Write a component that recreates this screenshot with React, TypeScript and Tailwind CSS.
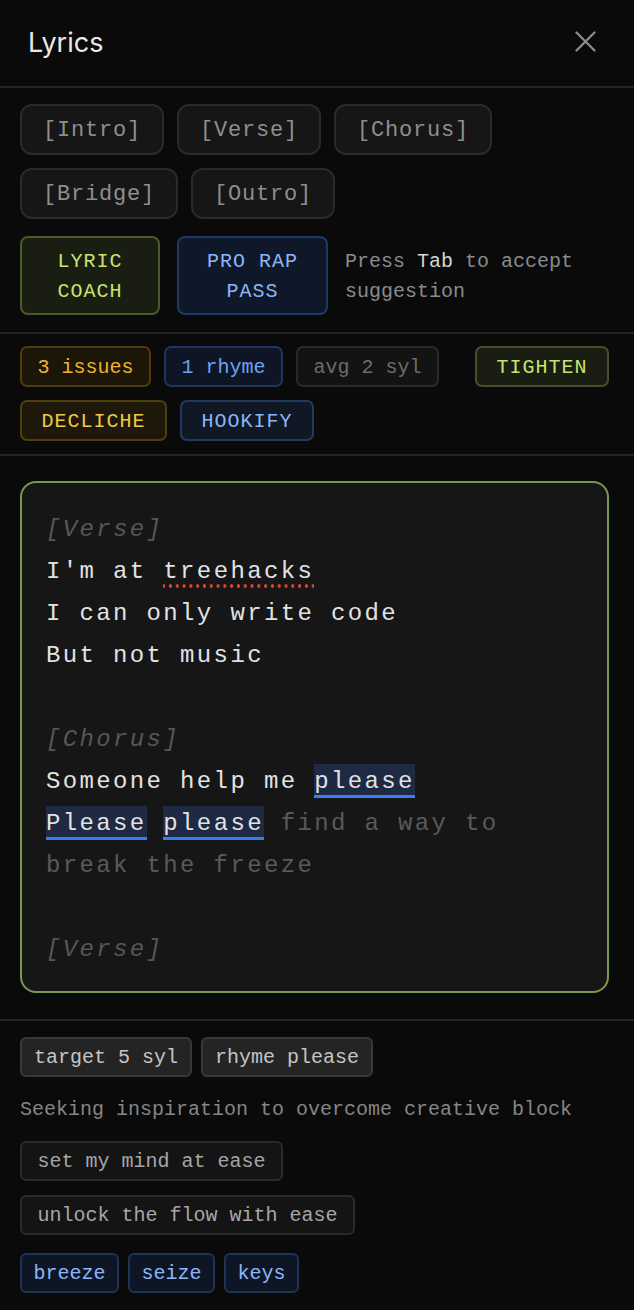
import React from "react";

const mono = "font-['Liberation_Mono','DejaVu_Sans_Mono',monospace]";

function SectionChip({ label }: { label: string }) {
  return (
    <div className="h-[51px] flex items-center px-[21px] pt-[2px] rounded-[12px] border-2 border-[#2a2a2a] bg-[#161616] text-[22px] tracking-[0.8px] text-[#8e8e8e]">
      {label}
    </div>
  );
}

export default function App() {
  return (
    <div className={`w-[634px] h-[1310px] bg-[#0a0a0a] overflow-hidden ${mono}`}>
      {/* Header */}
      <div className="h-[88px] flex items-center justify-between pl-[28px] pr-[38px] border-b-2 border-[#242424]">
        <div className="font-['Inter','Roboto',sans-serif] text-[27px] text-[#e8e8e8] leading-none mt-[-2px]">Lyrics</div>
        <svg width="21" height="21" viewBox="0 0 21 21" className="mt-[-4px]">
          <path d="M1.5 1.5 L19.5 19.5 M19.5 1.5 L1.5 19.5" stroke="#8f8f8f" strokeWidth="2.2" strokeLinecap="round" />
        </svg>
      </div>

      {/* Section chips + modes */}
      <div className="pl-5 pr-[25px] pt-[16px] pb-[17px] border-b-2 border-[#242424]">
        <div className="flex flex-wrap gap-x-[13px] gap-y-[13px]">
          <SectionChip label="[Intro]" />
          <SectionChip label="[Verse]" />
          <SectionChip label="[Chorus]" />
          <SectionChip label="[Bridge]" />
          <SectionChip label="[Outro]" />
        </div>
        <div className="flex items-center gap-[17px] mt-[17px]">
          <div className="w-[140px] h-[79px] shrink-0 flex items-center justify-center text-center rounded-[8px] border-2 border-[#4a5a2c] bg-[#1a1e12] text-[#c9e46c] text-[20px] tracking-[1px] leading-[30px] px-[4px] pt-[2px]">
            LYRIC COACH
          </div>
          <div className="w-[151px] h-[79px] shrink-0 flex items-center justify-center text-center rounded-[8px] border-2 border-[#1f3a66] bg-[#0f1828] text-[#8cb6f8] text-[20px] tracking-[1px] leading-[30px] px-[4px] pt-[2px]">
            PRO RAP PASS
          </div>
          <div className="text-[20px] leading-[30px] text-[#8a8a8a] pt-[2px]">
            Press <span className="text-[#d6d6d6]">Tab</span> to accept suggestion
          </div>
        </div>
      </div>

      {/* Stats + actions */}
      <div className="pl-5 pr-[25px] pt-[12px] pb-[13px] border-b-2 border-[#242424]">
        <div className="flex flex-wrap gap-[13px] text-[20px]">
          <div className="h-[41px] flex items-center pt-[2px] px-[15.5px] rounded-[7px] border-2 border-[#4e3a0e] bg-[#1c1608] text-[#f0b232]">3 issues</div>
          <div className="h-[41px] flex items-center pt-[2px] px-[15.5px] rounded-[7px] border-2 border-[#1e3560] bg-[#0e1626] text-[#6ea2f2]">1 rhyme</div>
          <div className="h-[41px] flex items-center pt-[2px] px-[15.5px] rounded-[7px] border-2 border-[#2a2a2a] bg-[#131313] text-[#6c6c6c]">avg 2 syl</div>
          <div className="ml-auto h-[41px] flex items-center pt-[2px] px-[19.5px] rounded-[7px] border-2 border-[#43512a] bg-[#191d12] text-[#c9e46c] tracking-[1px]">TIGHTEN</div>
          <div className="h-[41px] flex items-center pt-[2px] px-[19.5px] rounded-[7px] border-2 border-[#4e3f10] bg-[#1d1809] text-[#f2ca44] tracking-[1px]">DECLICHE</div>
          <div className="h-[41px] flex items-center pt-[2px] px-[19.5px] rounded-[7px] border-2 border-[#223a60] bg-[#101826] text-[#8cb6f8] tracking-[1px]">HOOKIFY</div>
        </div>
      </div>

      {/* Lyric editor */}
      <div className="pl-5 pr-[25px] pt-[25px] pb-[26px] border-b-2 border-[#242424]">
        <div className="rounded-[16px] border-2 border-[#7b9850] bg-[#161616] px-[24px] pt-[26px] pb-[20px] text-[24px] tracking-[2.36px] leading-[42px] text-[#e2e2e2]">
          <div className="italic text-[#565656]">[Verse]</div>
          <div>
            I'm at{" "}
            <span className="pb-[3px] bg-[radial-gradient(circle,#dd4430_1.5px,transparent_2px)] bg-[length:6.8px_4px] bg-repeat-x bg-bottom">treehacks</span>
          </div>
          <div>I can only write code</div>
          <div>But not music</div>
          <div className="h-[42px]" />
          <div className="italic text-[#565656]">[Chorus]</div>
          <div>
            Someone help me{" "}
            <span className="bg-[#1e2943] border-b-[3px] border-[#3b7cf0] pt-[4px] pb-[0px]">please</span>
          </div>
          <div>
            <span className="bg-[#1e2943] border-b-[3px] border-[#3b7cf0] pt-[4px] pb-[0px]">Please</span>{" "}
            <span className="bg-[#1e2943] border-b-[3px] border-[#3b7cf0] pt-[4px] pb-[0px]">please</span>{" "}
            <span className="text-[#5a5a5a]">find a way to break the freeze</span>
          </div>
          <div className="h-[42px]" />
          <div className="italic text-[#565656]">[Verse]</div>
        </div>
      </div>

      {/* Suggestions */}
      <div className="pl-5 pr-[25px] pt-[16px] text-[20px]">
        <div className="flex gap-[9px]">
          <div className="h-[40px] flex items-center pt-[2px] px-[12px] rounded-[6px] border-2 border-[#383838] bg-[#242424] text-[#c4c4c4]">target 5 syl</div>
          <div className="h-[40px] flex items-center pt-[2px] px-[12px] rounded-[6px] border-2 border-[#383838] bg-[#242424] text-[#c4c4c4]">rhyme please</div>
        </div>
        <div className="mt-[21px] leading-[24px] text-[#858585]">Seeking inspiration to overcome creative block</div>
        <div className="flex flex-col items-start gap-[14px] mt-[19px]">
          <div className="h-[40px] flex items-center pt-[2px] px-[15.5px] rounded-[6px] border-2 border-[#2a2a2a] bg-[#141414] text-[#a6a6a6]">set my mind at ease</div>
          <div className="h-[40px] flex items-center pt-[2px] px-[15.5px] rounded-[6px] border-2 border-[#2a2a2a] bg-[#141414] text-[#a6a6a6]">unlock the flow with ease</div>
        </div>
        <div className="flex gap-[9px] mt-[18px]">
          <div className="h-[40px] flex items-center pt-[2px] px-[11.5px] rounded-[6px] border-2 border-[#1d3357] bg-[#0e1626] text-[#8cb6f8]">breeze</div>
          <div className="h-[40px] flex items-center pt-[2px] px-[11.5px] rounded-[6px] border-2 border-[#1d3357] bg-[#0e1626] text-[#8cb6f8]">seize</div>
          <div className="h-[40px] flex items-center pt-[2px] px-[11.5px] rounded-[6px] border-2 border-[#1d3357] bg-[#0e1626] text-[#8cb6f8]">keys</div>
        </div>
      </div>
    </div>
  );
}
